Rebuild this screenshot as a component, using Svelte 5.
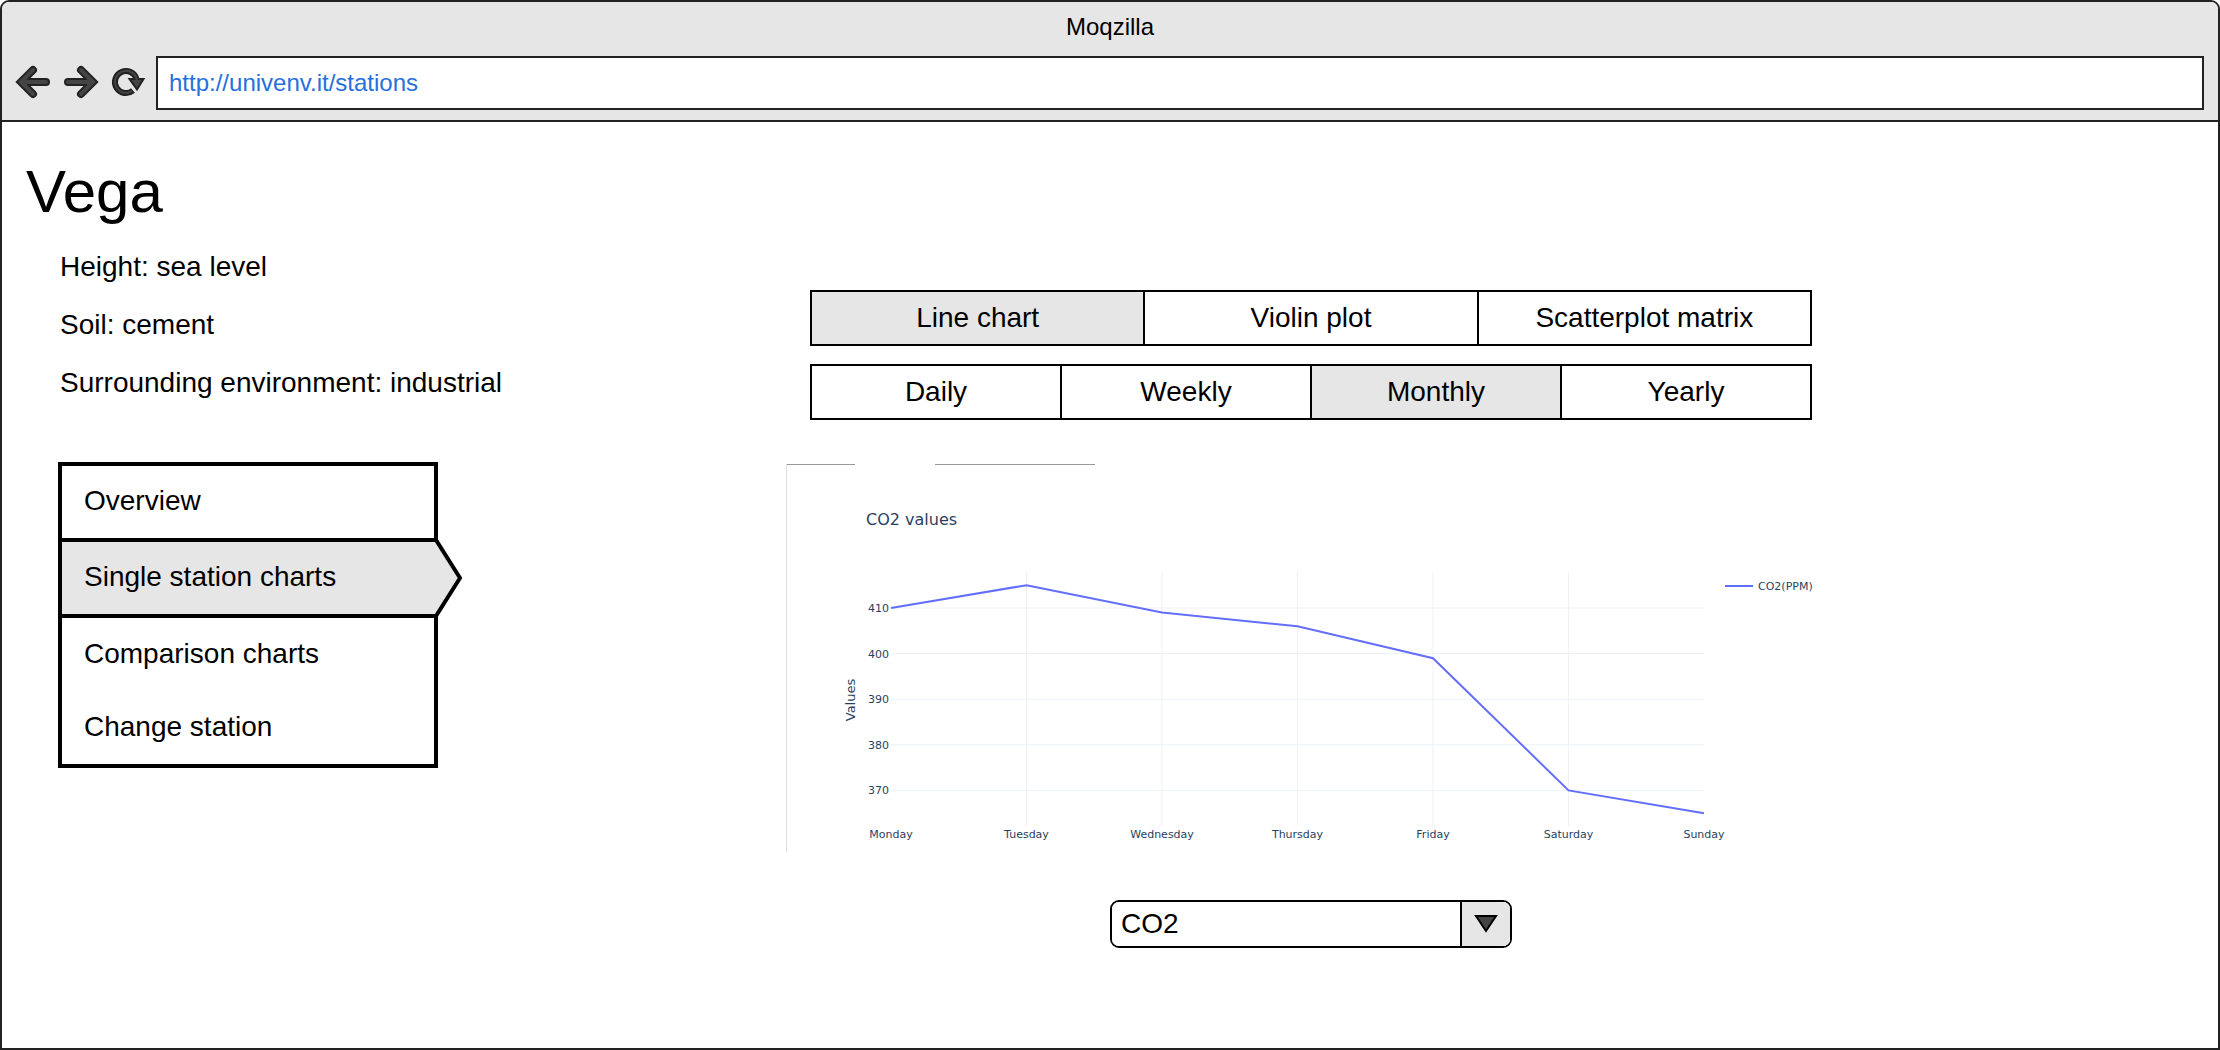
<script>
  let address = $state('http://univenv.it/stations');
  let chartType = $state('Line chart');
  let period = $state('Monthly');
  let measure = $state('CO2');

  const chartTypes = ['Line chart', 'Violin plot', 'Scatterplot matrix'];
  const periods = ['Daily', 'Weekly', 'Monthly', 'Yearly'];
  const facts = ['Height: sea level', 'Soil: cement', 'Surrounding environment: industrial'];
  const menu = ['Overview', 'Single station charts', 'Comparison charts', 'Change station'];
  const current = 'Single station charts';

  const data = [
    { day: 'Monday', value: 410 },
    { day: 'Tuesday', value: 415 },
    { day: 'Wednesday', value: 409 },
    { day: 'Thursday', value: 406 },
    { day: 'Friday', value: 399 },
    { day: 'Saturday', value: 370 },
    { day: 'Sunday', value: 365 },
  ];
  const ticks = [410, 400, 390, 380, 370];

  const plot = { left: 105, right: 918, top: 108, bottom: 362 };
  const x = (i) => plot.left + (i * (plot.right - plot.left)) / (data.length - 1);
  const y = (v) => 144 + (410 - v) * 4.56;
  const line = data.map((d, i) => `${x(i)},${y(d.value)}`).join(' ');
</script>

<div class="window">
  <header>
    <div class="title">Moqzilla</div>
    <div class="toolbar">
      <button class="icon" aria-label="Back">
        <svg viewBox="0 0 34 34">
          <path class="edge" d="M30 16H8M17 4L5 16L17 28" />
          <path class="core" d="M30 16H8M17 4L5 16L17 28" />
          <path class="core-fill" d="M5 16L11 10V22Z" />
        </svg>
      </button>
      <button class="icon" aria-label="Forward">
        <svg viewBox="0 0 34 34">
          <path class="edge" d="M4 16H26M17 4L29 16L17 28" />
          <path class="core" d="M4 16H26M17 4L29 16L17 28" />
          <path class="core-fill" d="M29 16L23 10V22Z" />
        </svg>
      </button>
      <button class="icon" aria-label="Reload">
        <svg viewBox="0 0 34 34">
          <path class="ring-edge" d="M21 24.500A11 11 0 1 1 24.500 13" />
          <path class="head" d="M17.500 13H31.500L25 23.500Z" />
          <path class="ring-core" d="M20.200 25A11 11 0 1 1 25 15" />
        </svg>
      </button>
      <input class="address" type="text" aria-label="Address" bind:value={address} />
    </div>
  </header>

  <div class="page">
    <aside>
      <h1>Vega</h1>
      <ul class="facts">
        {#each facts as fact}<li>{fact}</li>{/each}
      </ul>
      <nav aria-label="Station">
        <ul>
          {#each menu as item}
            <li class:current={item === current}>
              <a href="#{item.toLowerCase().replaceAll(' ', '-')}" aria-current={item === current ? 'page' : undefined}>{item}</a>
              {#if item === current}
                <svg class="pointer" viewBox="0 0 28 80" aria-hidden="true">
                  <path d="M-2 2H2L26 40L2 78H-2" />
                </svg>
              {/if}
            </li>
          {/each}
        </ul>
      </nav>
    </aside>

    <main>
      <div class="tabs" role="group" aria-label="Chart type">
        {#each chartTypes as t}
          <button class:on={t === chartType} aria-pressed={t === chartType} onclick={() => (chartType = t)}>{t}</button>
        {/each}
      </div>
      <div class="tabs" role="group" aria-label="Period">
        {#each periods as p}
          <button class:on={p === period} aria-pressed={p === period} onclick={() => (period = p)}>{p}</button>
        {/each}
      </div>

      <svg class="chart" viewBox="0 0 1050 388" role="img" aria-label="CO2 values by day">
        <path class="side" d="M0.500 0V388" />
        <path class="rule" d="M1 0.500H69M149 0.500H309" />
        <text class="heading" x="80" y="61">CO2 values</text>
        {#each ticks as t}
          <line class="grid" x1={plot.left} x2={plot.right} y1={y(t)} y2={y(t)} />
          <text class="end" x="103" y={y(t) + 4}>{t}</text>
        {/each}
        {#each data as d, i}
          {#if i > 0 && i < data.length - 1}
            <line class="grid" x1={x(i)} x2={x(i)} y1={plot.top} y2={plot.bottom} />
          {/if}
          <text class="mid" x={x(i)} y="374">{d.day}</text>
        {/each}
        <text class="axis" transform="translate(69 236) rotate(-90)">Values</text>
        <polyline class="series" points={line} />
        <path class="series" d="M939 122H967" />
        <text x="972" y="126">CO2(PPM)</text>
      </svg>

      <div class="picker">
        <select aria-label="Measure" bind:value={measure}>
          <option>CO2</option>
        </select>
        <span class="drop" aria-hidden="true">
          <svg viewBox="0 0 24 20"><path d="M2 2H22L12 17Z" /></svg>
        </span>
      </div>
    </main>
  </div>
</div>

<style>
  :global(body) {
    margin: 0;
    background: #fff;
  }
  .window {
    box-sizing: border-box;
    display: flex;
    flex-direction: column;
    min-height: 100vh;
    border: 2px solid #222;
    border-radius: 9px 9px 0 0;
    overflow: hidden;
    font-family: "Liberation Sans", Arial, sans-serif;
    font-size: 28px;
    color: #000;
  }
  button,
  input,
  select {
    font: inherit;
    color: inherit;
    margin: 0;
    box-sizing: border-box;
  }
  ul {
    list-style: none;
    margin: 0;
    padding: 0;
  }
  header {
    background: #e6e6e6;
    border-bottom: 2px solid #222;
    padding: 0 14px 10px;
    font-size: 24px;
  }
  .title {
    line-height: 50px;
    padding-bottom: 4px;
    text-align: center;
  }
  .toolbar {
    display: flex;
    align-items: center;
    gap: 14px;
  }
  .icon {
    width: 34px;
    height: 34px;
    padding: 0;
    border: 0;
    background: none;
  }
  .icon svg {
    display: block;
    overflow: visible;
  }
  .icon path {
    fill: none;
    stroke-linecap: round;
    stroke-linejoin: miter;
  }
  .icon .edge {
    stroke: #222;
    stroke-width: 8;
  }
  .icon .core {
    stroke: #444;
    stroke-width: 4;
  }
  .icon .core-fill {
    fill: #444;
  }
  .icon .ring-edge {
    stroke: #222;
    stroke-width: 6;
    stroke-linecap: butt;
  }
  .icon .ring-core {
    stroke: #444;
    stroke-width: 2;
    stroke-linecap: butt;
  }
  .icon .head {
    fill: #444;
    stroke: #222;
    stroke-width: 2;
  }
  .address {
    flex: 1;
    min-width: 0;
    height: 54px;
    margin-left: -4px;
    padding: 0 11px;
    border: 2px solid #222;
    border-radius: 0;
    background: #fff;
    color: #276fdb;
  }
  .page {
    flex: 1;
    display: grid;
    grid-template-columns: 784fr 1050fr 382fr;
    background: #fff;
  }
  aside {
    padding: 34px 24px;
  }
  h1 {
    margin: 0 0 10px;
    font-size: 60px;
    font-weight: 400;
    line-height: 72px;
  }
  .facts {
    padding-left: 34px;
    line-height: 58px;
  }
  nav {
    box-sizing: border-box;
    max-width: 380px;
    margin: 50px 0 0 32px;
    border: 4px solid #000;
  }
  nav li {
    position: relative;
  }
  nav a {
    display: block;
    padding: 0 22px 2px;
    line-height: 71px;
    color: inherit;
    text-decoration: none;
  }
  nav .current {
    border: solid #000;
    border-width: 4px 0;
    background: #e6e6e6;
  }
  nav li:first-child a,
  nav .current a {
    line-height: 70px;
  }
  .pointer {
    position: absolute;
    left: 100%;
    top: -4px;
    width: 28px;
    height: 80px;
    fill: #e6e6e6;
    stroke: #000;
    stroke-width: 4;
  }
  main {
    display: flex;
    flex-direction: column;
    padding: 168px 0 40px;
  }
  .tabs {
    display: flex;
    margin: 0 24px 18px;
    border: 2px solid #000;
  }
  .tabs button {
    flex: 1 1 0;
    height: 52px;
    padding: 0 8px;
    border: 0;
    background: #fff;
    white-space: nowrap;
  }
  .tabs button + button {
    border-left: 2px solid #000;
  }
  .tabs .on {
    background: #e6e6e6;
  }
  .chart {
    display: block;
    width: 100%;
    margin-top: 26px;
    font-family: "DejaVu Sans", Verdana, sans-serif;
    font-size: 11px;
    fill: #2a3f5f;
  }
  .heading {
    font-size: 16px;
  }
  .axis {
    font-size: 13px;
    text-anchor: middle;
  }
  .mid {
    text-anchor: middle;
  }
  .end {
    text-anchor: end;
  }
  .grid {
    stroke: #edf1f8;
  }
  .side {
    stroke: #ddd;
  }
  .rule {
    stroke: #999;
  }
  .series {
    fill: none;
    stroke: #636efa;
    stroke-width: 2;
  }
  .picker {
    display: grid;
    align-self: center;
    width: 402px;
    margin-top: 48px;
    box-sizing: border-box;
    border: 2px solid #000;
    border-radius: 9px;
    overflow: hidden;
  }
  .picker select {
    grid-area: 1 / 1;
    appearance: none;
    height: 44px;
    padding: 0 60px 2px 9px;
    border: 0;
    background: #fff;
  }
  .drop {
    grid-area: 1 / 1;
    justify-self: end;
    display: grid;
    place-items: center;
    width: 48px;
    border-left: 2px solid #000;
    background: #e6e6e6;
    pointer-events: none;
  }
  .drop svg {
    width: 24px;
    height: 20px;
    fill: #444;
    stroke: #000;
    stroke-width: 2;
  }
</style>
